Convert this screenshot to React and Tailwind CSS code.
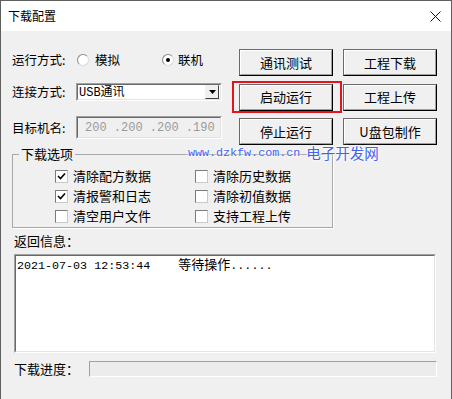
import React from "react";

const CJK = "font-['Noto_Sans_CJK_SC',sans-serif]";
const MONO = "font-['Liberation_Mono','Noto_Sans_CJK_SC',monospace]";

function Btn({ children }) {
  return (
    <div className="h-[27px] border border-[#6b6b6b] border-r-black border-b-black">
      <div className="h-full border border-white border-r-[#a0a0a0] border-b-[#a0a0a0] bg-[#f0f0f0] flex items-center justify-center">
        <span className={`${CJK} text-[13px] leading-[16px] text-black`}>{children}</span>
      </div>
    </div>
  );
}

function Radio({ checked }) {
  return (
    <div className="w-[12px] h-[12px] rounded-full border border-[#8a8a8a] border-r-[#dcdcdc] border-b-[#dcdcdc] bg-white flex items-center justify-center">
      {checked && <div className="w-[4px] h-[4px] rounded-full bg-black" />}
    </div>
  );
}

function Check({ checked, label }) {
  return (
    <div className="h-[20px] flex items-center">
      <div className="w-[13px] h-[13px] border border-[#7a7a7a] border-r-[#c8c8c8] border-b-[#c8c8c8] bg-white flex items-center justify-center">
        {checked && (
          <svg width="9" height="9" viewBox="0 0 9 9">
            <path d="M1 4 L3.5 6.5 L8 1.5" stroke="black" strokeWidth="1.6" fill="none" />
          </svg>
        )}
      </div>
      <span className={`${CJK} ml-[5px] text-[13px] leading-[16px] text-black`}>{label}</span>
    </div>
  );
}

function Sunken({ className = "", innerClass = "", children }) {
  return (
    <div className={`border border-[#a0a0a0] border-r-white border-b-white ${className}`}>
      <div className={`h-full border border-[#696969] border-r-[#e3e3e3] border-b-[#e3e3e3] ${innerClass}`}>
        {children}
      </div>
    </div>
  );
}

export default function App() {
  return (
    <div className="w-[452px] h-[399px] border border-[#5f5f5f] border-b-0 flex flex-col bg-[#f0f0f0] overflow-hidden">
      {/* title bar */}
      <div className="h-[30px] bg-white flex items-center justify-between pl-[7px] pr-[10px]">
        <span className={`${CJK} text-[12px] leading-[16px] text-black`}>下载配置</span>
        <svg width="11" height="11" viewBox="0 0 11 11">
          <path d="M0.5 0.5 L10.5 10.5 M10.5 0.5 L0.5 10.5" stroke="#111" strokeWidth="1" />
        </svg>
      </div>

      {/* body */}
      <div className="relative flex-1 pl-[11px]">
        <div className="flex items-start mt-[18px]">
          {/* left column */}
          <div className="w-[210px] flex flex-col">
            <div className="h-[22px] flex items-center">
              <span className={`${CJK} w-[65px] text-[12.5px] leading-[16px] text-black`}>运行方式:</span>
              <div className="w-[85px] flex items-center">
                <Radio />
                <span className={`${CJK} ml-[6px] text-[12.5px] leading-[16px] text-black`}>模拟</span>
              </div>
              <div className="flex items-center">
                <Radio checked />
                <span className={`${CJK} ml-[4px] text-[12.5px] leading-[16px] text-black`}>联机</span>
              </div>
            </div>
            <div className="h-[18px] mt-[12px] flex items-center">
              <span className={`${CJK} w-[64px] text-[12.5px] leading-[16px] text-black`}>连接方式:</span>
              <Sunken className="w-[146px] h-[18px]" innerClass="bg-white flex items-center justify-between pl-[1px] pr-[1px]">
                <span className={`${MONO} text-[12px] leading-[14px] text-black`}>USB<span className={CJK}>通讯</span></span>
                <div className="w-[14px] h-[14px] border border-[#f0f0f0] border-r-[#404040] border-b-[#404040] bg-[#f0f0f0] flex items-center justify-center">
                  <svg width="7" height="4" viewBox="0 0 7 4">
                    <path d="M0 0 H7 L3.5 4 Z" fill="black" />
                  </svg>
                </div>
              </Sunken>
            </div>
            <div className="h-[23px] mt-[15px] flex items-center">
              <span className={`${CJK} w-[64px] text-[12.5px] leading-[16px] text-black`}>目标机名:</span>
              <Sunken className="w-[146px] h-[23px]" innerClass="bg-[#f0f0f0] flex items-center pl-[7px]">
                <span className={`${MONO} text-[12px] leading-[14px] text-[#9a9a9a] whitespace-pre`}>200 .200 .200 .190</span>
              </Sunken>
            </div>
          </div>

          {/* right buttons */}
          <div className="ml-[17px] grid grid-cols-[94px_94px] gap-x-[10px] gap-y-[7.5px]">
            <Btn>通讯测试</Btn>
            <Btn>工程下载</Btn>
            <div className="relative">
              <Btn>启动运行</Btn>
              <div className="absolute -left-[7px] -right-[9px] -top-[3px] -bottom-[2px] border-2 border-[#e0161c]" />
            </div>
            <Btn>工程上传</Btn>
            <Btn>停止运行</Btn>
            <Btn>U盘包制作</Btn>
          </div>
        </div>

        {/* group box */}
        <fieldset className="mt-[1px] w-[321px] border border-[#a8a8a8] shadow-[1px_1px_0_#ffffff] px-0 pb-[1px]">
          <legend className={`${CJK} ml-[6px] px-[2px] text-[13px] leading-[16px] text-black`}>下载选项</legend>
          <div className="grid grid-cols-[140px_1fr] pl-[42px] pt-[4px]">
            <Check checked label="清除配方数据" />
            <Check label="清除历史数据" />
            <Check checked label="清报警和日志" />
            <Check label="清除初值数据" />
            <Check label="清空用户文件" />
            <Check label="支持工程上传" />
          </div>
        </fieldset>

        {/* watermark */}
        <div className="absolute left-[187px] top-[113px] flex items-center text-[#3f62f2] [text-shadow:0_0_2px_#fff,0_0_3px_#fff,0_0_4px_#fff]">
          <span className={`${MONO} text-[11.7px] leading-[16px]`}>www.dzkfw.com.cn</span>
          <span className={`${CJK} ml-[6px] text-[14.5px] leading-[18px]`}>电子开发网</span>
        </div>

        {/* log */}
        <div className={`${CJK} mt-[5px] ml-[2px] text-[13px] leading-[16px] text-black`}>返回信息：</div>
        <Sunken className="mt-[5px] ml-[2px] w-[422px] h-[99px]" innerClass="bg-white pl-[1px] pt-0">
          <div className={`${MONO} text-[11.7px] leading-[16px] text-black whitespace-pre`}>
            {"2021-07-03 12:53:44    "}
            <span className={`${CJK} text-[13px]`}>等待操作</span>
            {"......"}
          </div>
        </Sunken>

        {/* progress */}
        <div className="flex items-center mt-[8px] ml-[2px]">
          <span className={`${CJK} w-[75px] text-[13px] leading-[16px] text-black`}>下载进度：</span>
          <div className="w-[348px] h-[16px] border border-[#a0a0a0] border-r-white border-b-white bg-[#ececec]" />
        </div>
      </div>
    </div>
  );
}
